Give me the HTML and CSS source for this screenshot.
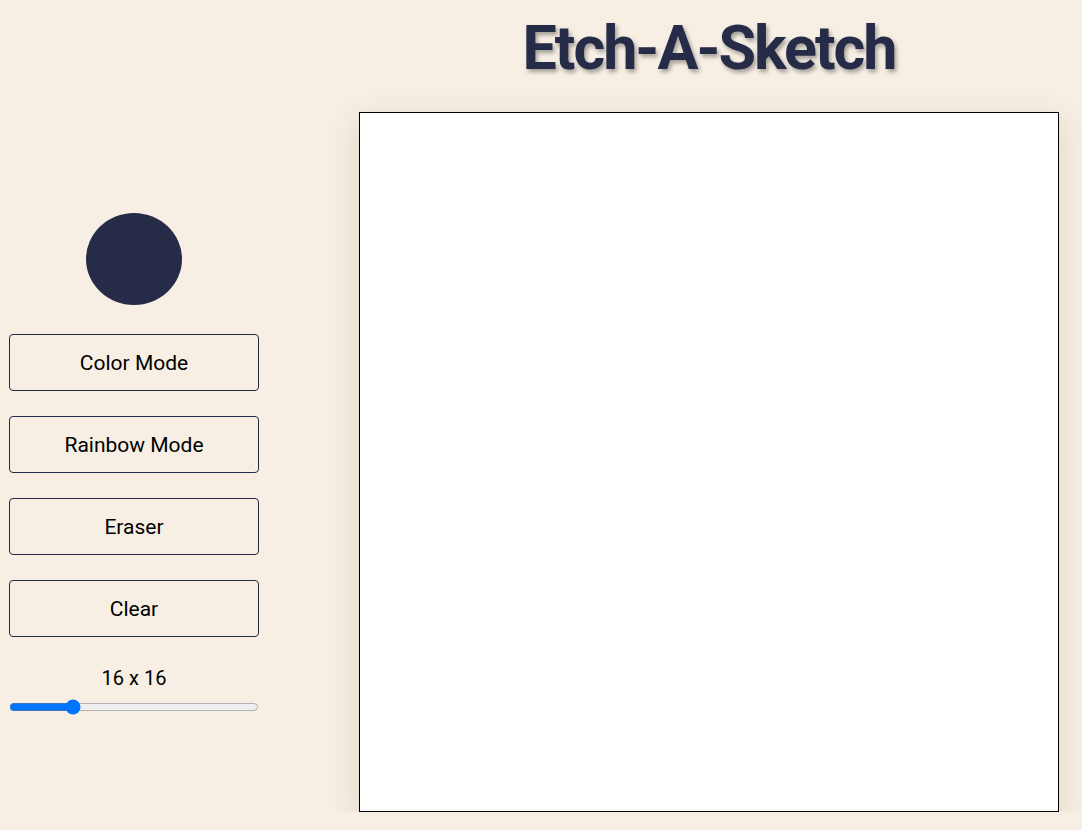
FILE: index.html
```html
<!DOCTYPE html>
<html>
<head>
<meta charset="utf-8">
<link rel="stylesheet" href="styles.css">
</head>
<body>
<div class="page">
  <div class="sidebar">
    <div class="swatch"></div>
    <button class="btn">Color Mode</button>
    <button class="btn">Rainbow Mode</button>
    <button class="btn">Eraser</button>
    <button class="btn">Clear</button>
    <div class="size-label">16 x 16</div>
    <input class="slider" type="range" min="1" max="64" value="16">
  </div>
  <div class="main">
    <h1 class="title">Etch-A-Sketch</h1>
    <div class="board"></div>
  </div>
</div>
</body>
</html>
```

FILE: styles.css
```css
html, body {
  margin: 0;
  padding: 0;
  background: #f7efe4;
  font-family: Roboto, "Liberation Sans", sans-serif;
}
.page {
  display: flex;
  padding-left: 9px;
  gap: 100px;
}
.sidebar {
  width: 250px;
  display: flex;
  flex-direction: column;
  align-items: center;
  margin-top: 213px;
}
.swatch {
  width: 96px;
  height: 92px;
  border-radius: 50%;
  background: #262b48;
  margin-bottom: 29px;
}
.btn {
  width: 250px;
  height: 57px;
  margin-bottom: 25px;
  background: transparent;
  border: 1px solid #262b48;
  border-radius: 4px;
  font-family: Roboto, "Liberation Sans", sans-serif;
  font-size: 21px;
  color: #000;
}
.size-label {
  font-size: 20px;
  color: #000;
  margin-top: 4px;
  height: 24px;
  line-height: 24px;
}
.slider {
  width: 250px;
  margin: 9px 0 0;
}
.main {
  display: flex;
  flex-direction: column;
  align-items: center;
  width: 700px;
}
.title {
  margin: 12px 0 0;
  height: 100px;
  font-size: 61px;
  line-height: 72px;
  font-weight: 700;
  letter-spacing: -2px;
  color: #262b48;
  text-shadow: 2px 3px 4px rgba(0,0,0,0.35);
}
.board {
  width: 698px;
  height: 698px;
  border: 1px solid #000;
  background: #fff;
  box-shadow: 0 8px 30px rgba(90,60,30,0.15);
}
```
